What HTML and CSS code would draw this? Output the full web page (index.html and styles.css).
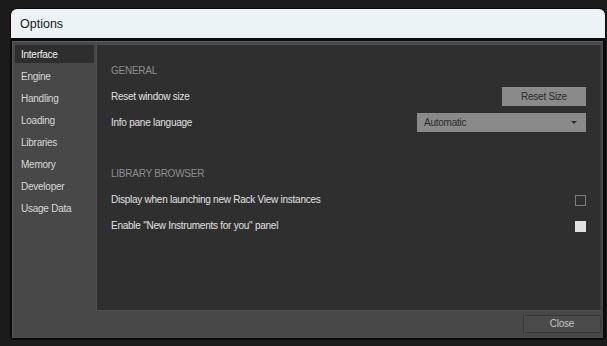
FILE: index.html
```html
<!DOCTYPE html>
<html>
<head>
<meta charset="utf-8">
<link rel="stylesheet" href="styles.css">
</head>
<body>
<div class="window">
  <div class="titlebar">Options</div>
  <div class="panel">
    <div class="main">
      <nav class="sidebar">
        <div class="nav-item active">Interface</div>
        <div class="nav-item">Engine</div>
        <div class="nav-item">Handling</div>
        <div class="nav-item">Loading</div>
        <div class="nav-item">Libraries</div>
        <div class="nav-item">Memory</div>
        <div class="nav-item">Developer</div>
        <div class="nav-item">Usage Data</div>
      </nav>
      <section class="content">
        <div class="section">
          <div class="row header">GENERAL</div>
          <div class="row">
            <span>Reset window size</span>
            <div class="btn">Reset Size</div>
          </div>
          <div class="row">
            <span>Info pane language</span>
            <div class="select"><span>Automatic</span><span class="arrow"></span></div>
          </div>
        </div>
        <div class="section second">
          <div class="row header">LIBRARY BROWSER</div>
          <div class="row">
            <span>Display when launching new Rack View instances</span>
            <span class="check"></span>
          </div>
          <div class="row">
            <span>Enable "New Instruments for you" panel</span>
            <span class="check checked"></span>
          </div>
        </div>
      </section>
    </div>
    <div class="footer">
      <div class="close">Close</div>
    </div>
  </div>
</div>
</body>
</html>
```

FILE: styles.css
```css
html, body {
  margin: 0;
  padding: 0;
  background: #1b1b1b;
  width: 607px;
  height: 346px;
  overflow: hidden;
  font-family: "Liberation Sans", Arial, sans-serif;
}

.window {
  margin: 8px 0 0 10px;
  width: 596px;
  box-sizing: border-box;
  background: #0b0b0b;
  border-radius: 7px 7px 4px 4px;
  padding: 1px 1px 2px 1px;
}

.titlebar {
  height: 29px;
  box-sizing: border-box;
  background: #ebf3f7;
  border-radius: 6px 6px 0 0;
  padding-left: 9px;
  line-height: 30px;
  font-size: 12.5px;
  color: #1a1a1a;
}

.panel {
  margin: 3px 2px 0 1px;
  height: 297px;
  box-sizing: border-box;
  background: #484848;
  border-top: 1px solid #5e5e5e;
  border-left: 1px solid #555;
  padding: 2px 2px 5px 0;
  display: flex;
  flex-direction: column;
  letter-spacing: -0.25px;
}

.main {
  display: flex;
  height: 267px;
}

.sidebar {
  width: 81px;
  padding: 1px 0 0 2px;
  display: flex;
  flex-direction: column;
  gap: 4px;
}

.nav-item {
  height: 18px;
  width: 79px;
  box-sizing: border-box;
  padding-left: 6px;
  line-height: 19px;
  font-size: 10px;
  color: #d8d8d8;
}

.nav-item.active {
  background: #2e2e2e;
  color: #f2f2f2;
}

.content {
  flex: 1;
  box-sizing: border-box;
  background: #2f2f2f;
  border: 1px solid #505050;
  border-right-color: #3a3a3a;
  padding: 12px 14px 0 14px;
}

.section.second {
  margin-top: 25px;
}

.row {
  height: 26px;
  display: flex;
  align-items: center;
  justify-content: space-between;
  font-size: 10px;
  color: #e2e2e2;
}

.row.header {
  color: #8e8e8e;
}

.btn {
  width: 84px;
  height: 19px;
  background: #8a8a8a;
  color: #2a2a2a;
  font-size: 10px;
  line-height: 19px;
  text-align: center;
}

.select {
  width: 169px;
  height: 19px;
  box-sizing: border-box;
  background: #8a8a8a;
  color: #2a2a2a;
  padding: 0 9px 0 7px;
  display: flex;
  align-items: center;
  justify-content: space-between;
}

.arrow {
  width: 0;
  height: 0;
  border-left: 3px solid transparent;
  border-right: 3px solid transparent;
  border-top: 3px solid #2a2a2a;
}

.check {
  width: 11px;
  height: 11px;
  box-sizing: border-box;
  border: 1px solid #7c7c7c;
  margin-top: 3px;
}

.check.checked {
  background: #e0e0e0;
  border-color: #e0e0e0;
}

.footer {
  margin-top: 4px;
  display: flex;
  justify-content: flex-end;
}

.close {
  width: 78px;
  height: 18px;
  box-sizing: border-box;
  background: #4b4b4b;
  border: 1px solid #383838;
  color: #c4c4c4;
  font-size: 10px;
  line-height: 16px;
  text-align: center;
}
```
